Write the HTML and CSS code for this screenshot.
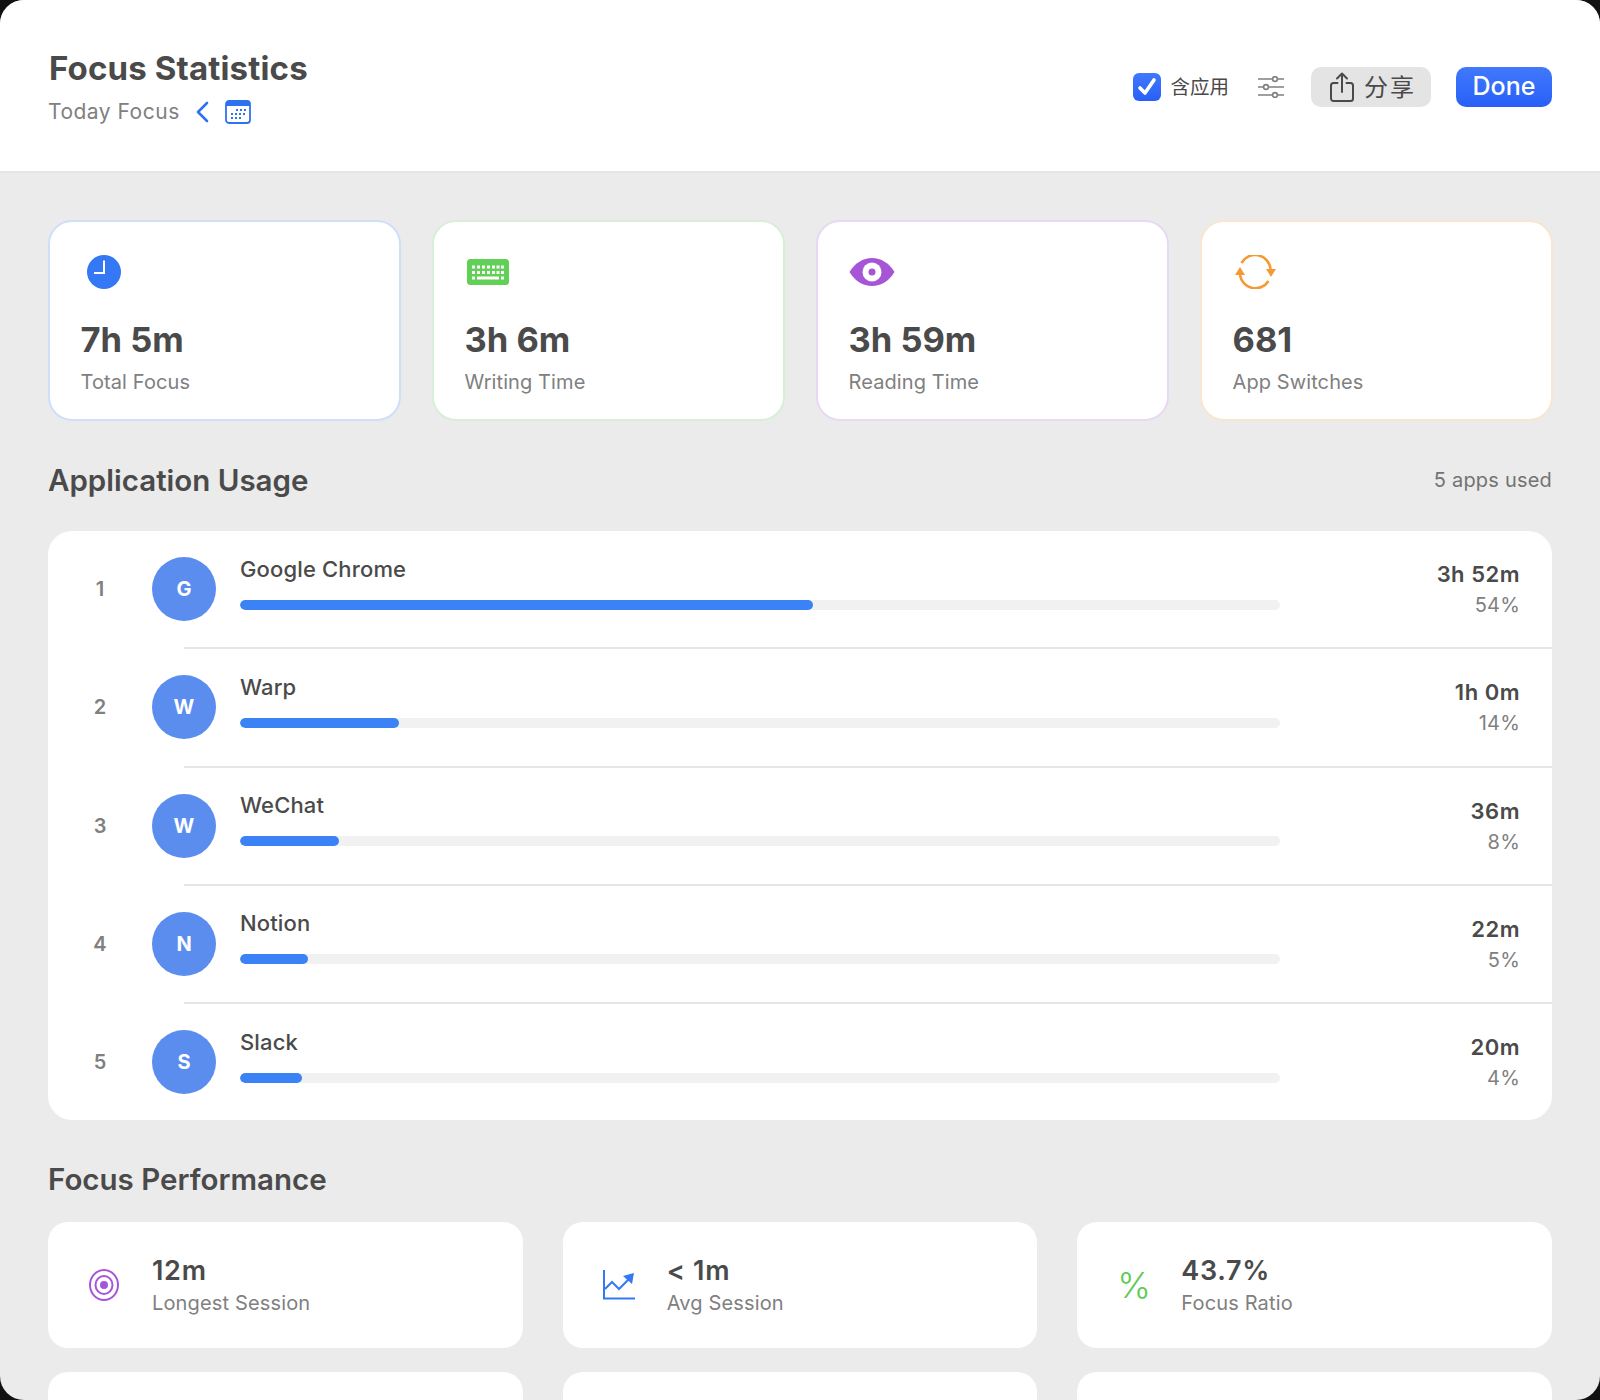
FILE: index.html
```html
<!DOCTYPE html>
<html lang="en">
<head>
  <meta charset="UTF-8">
  <title>Focus Statistics</title>
  <link rel="stylesheet" href="styles.css">
</head>
<body>
  <div class="window">

    <header class="header">
      <div class="header-left">
        <h1>Focus Statistics</h1>
        <div class="date-row">
          <span class="subtitle">Today Focus</span>
          <svg class="chevron" width="14" height="22" viewBox="0 0 14 22"><path d="M12 2 3 11l9 9" fill="none" stroke="#2f72f0" stroke-width="2.6" stroke-linecap="round" stroke-linejoin="round"/></svg>
          <svg class="calendar" width="26" height="24" viewBox="0 0 26 24">
            <rect x="1" y="1" width="24" height="22" rx="3" fill="#fff" stroke="#2f72f0" stroke-width="1.8"/>
            <path d="M1 6V4a3 3 0 0 1 3-3h18a3 3 0 0 1 3 3v2z" fill="#2f72f0"/>
            <g fill="#2f72f0">
              <rect x="11" y="9" width="2" height="2"/><rect x="15" y="9" width="2" height="2"/><rect x="19" y="9" width="2" height="2"/>
              <rect x="6" y="13" width="2" height="2"/><rect x="10" y="13" width="2" height="2"/><rect x="14" y="13" width="2" height="2"/><rect x="18" y="13" width="2" height="2"/>
              <rect x="6" y="17" width="2" height="2"/><rect x="10" y="17" width="2" height="2"/><rect x="14" y="17" width="2" height="2"/>
            </g>
          </svg>
        </div>
      </div>
      <div class="header-right">
        <label class="check-label">
          <span class="checkbox">
            <svg width="28" height="28" viewBox="0 0 28 28"><path d="M7 15l5 5 9-13" fill="none" stroke="#fff" stroke-width="3.6" stroke-linecap="round" stroke-linejoin="round"/></svg>
          </span>
          <span class="check-text">含应用</span>
        </label>
        <svg class="sliders" width="26" height="22" viewBox="0 0 26 22">
          <g stroke="#808080" stroke-width="1.6" fill="#fff">
            <path d="M0 3h26M0 11h26M0 19h26"/>
            <circle cx="17" cy="3" r="2.4"/><circle cx="8" cy="11" r="2.4"/><circle cx="17" cy="19" r="2.4"/>
          </g>
        </svg>
        <button class="btn-share">
          <svg width="24" height="30" viewBox="0 0 24 30">
            <path d="M7.5 11H3.5A2.5 2.5 0 0 0 1 13.500V26.500A2.500 2.500 0 0 0 3.500 29H20.500A2.500 2.500 0 0 0 23 26.500V13.500A2.500 2.500 0 0 0 20.500 11H16.500M12 20V2M7 6.500 12 1.500l5 5" fill="none" stroke="#4a4a4a" stroke-width="2" stroke-linecap="round" stroke-linejoin="round"/>
          </svg>
          <span>分享</span>
        </button>
        <button class="btn-done">Done</button>
      </div>
    </header>

    <main class="content">
      <section class="summary">
        <div class="summary-card blue">
          <div class="summary-icon">
            <svg class="clock" width="34" height="34" viewBox="0 0 34 34">
              <circle cx="17" cy="17" r="17" fill="#3478f6"/>
              <path d="M17 5.500V18H7" fill="none" stroke="#fff" stroke-width="2"/>
            </svg>
          </div>
          <div class="summary-value">7h 5m</div>
          <div class="summary-label">Total Focus</div>
        </div>
        <div class="summary-card green">
          <div class="summary-icon">
            <svg class="keyboard" width="42" height="26" viewBox="0 0 42 26">
              <rect width="42" height="26" rx="3.500" fill="#62cf57"/>
              <g fill="#fff">
                <rect x="5" y="6.500" width="3" height="3"/><rect x="10" y="6.500" width="3" height="3"/><rect x="15" y="6.500" width="3" height="3"/><rect x="20" y="6.500" width="3" height="3"/><rect x="25" y="6.500" width="3" height="3"/><rect x="29.500" y="6.500" width="3" height="3"/><rect x="34" y="6.500" width="3" height="3"/>
                <rect x="5" y="12" width="3" height="3"/><rect x="10" y="12" width="3" height="3"/><rect x="15" y="12" width="3" height="3"/><rect x="20" y="12" width="3" height="3"/><rect x="25" y="12" width="3" height="3"/><rect x="29.500" y="12" width="3" height="3"/><rect x="34" y="12" width="3" height="3"/>
                <rect x="5" y="17.500" width="3" height="3"/><rect x="10" y="17.500" width="22" height="3"/><rect x="34" y="17.500" width="3" height="3"/>
              </g>
            </svg>
          </div>
          <div class="summary-value">3h 6m</div>
          <div class="summary-label">Writing Time</div>
        </div>
        <div class="summary-card purple">
          <div class="summary-icon">
            <svg class="eye" width="46" height="28" viewBox="0 0 46 28">
              <path d="M0.500 14C6 5 14 0 23 0s17 5 22.500 14C40 23 32 28 23 28S6 23 0.500 14z" fill="#a655d6"/>
              <circle cx="23" cy="14" r="9.500" fill="#fff"/>
              <circle cx="23" cy="14" r="3.500" fill="#a655d6"/>
            </svg>
          </div>
          <div class="summary-value">3h 59m</div>
          <div class="summary-label">Reading Time</div>
        </div>
        <div class="summary-card orange">
          <div class="summary-icon">
            <svg class="sync" width="42" height="34" viewBox="0 0 42 34">
              <path d="M6.500 8A15.500 15.500 0 0 1 35.500 14M33.500 26A15.500 15.500 0 0 1 5 20" fill="none" stroke="#f59a33" stroke-width="2.600"/>
              <path d="M31 14h10l-5 8zM0 20h10L5 12z" fill="#f59a33"/>
            </svg>
          </div>
          <div class="summary-value">681</div>
          <div class="summary-label">App Switches</div>
        </div>
      </section>

      <div class="section-head">
        <h2>Application Usage</h2>
        <span class="section-note">5 apps used</span>
      </div>

      <section class="app-list">
        <div class="app-row">
          <div class="rank">1</div>
          <div class="avatar">G</div>
          <div class="app-info">
            <div class="app-name">Google Chrome</div>
            <div class="bar"><div class="bar-fill" style="width: 55.1%"></div></div>
          </div>
          <div class="app-stats"><div class="app-time">3h 52m</div><div class="app-pct">54%</div></div>
        </div>
        <hr class="row-line">
        <div class="app-row">
          <div class="rank">2</div>
          <div class="avatar">W</div>
          <div class="app-info">
            <div class="app-name">Warp</div>
            <div class="bar"><div class="bar-fill" style="width: 15.3%"></div></div>
          </div>
          <div class="app-stats"><div class="app-time">1h 0m</div><div class="app-pct">14%</div></div>
        </div>
        <hr class="row-line">
        <div class="app-row">
          <div class="rank">3</div>
          <div class="avatar">W</div>
          <div class="app-info">
            <div class="app-name">WeChat</div>
            <div class="bar"><div class="bar-fill" style="width: 9.5%"></div></div>
          </div>
          <div class="app-stats"><div class="app-time">36m</div><div class="app-pct">8%</div></div>
        </div>
        <hr class="row-line">
        <div class="app-row">
          <div class="rank">4</div>
          <div class="avatar">N</div>
          <div class="app-info">
            <div class="app-name">Notion</div>
            <div class="bar"><div class="bar-fill" style="width: 6.5%"></div></div>
          </div>
          <div class="app-stats"><div class="app-time">22m</div><div class="app-pct">5%</div></div>
        </div>
        <hr class="row-line">
        <div class="app-row">
          <div class="rank">5</div>
          <div class="avatar">S</div>
          <div class="app-info">
            <div class="app-name">Slack</div>
            <div class="bar"><div class="bar-fill" style="width: 6%"></div></div>
          </div>
          <div class="app-stats"><div class="app-time">20m</div><div class="app-pct">4%</div></div>
        </div>
      </section>

      <h2 class="perf-title">Focus Performance</h2>

      <section class="perf-grid">
        <div class="perf-card">
          <div class="perf-icon">
            <svg class="target" width="30" height="32" viewBox="0 0 30 32">
              <g fill="none" stroke="#a655d6" stroke-width="2">
                <ellipse cx="15" cy="16" rx="14" ry="15"/>
                <ellipse cx="15" cy="16" rx="8.500" ry="9"/>
              </g>
              <circle cx="15" cy="16" r="4" fill="#a655d6"/>
            </svg>
          </div>
          <div class="perf-text">
            <div class="perf-value">12m</div>
            <div class="perf-label">Longest Session</div>
          </div>
        </div>
        <div class="perf-card">
          <div class="perf-icon">
            <svg width="32" height="30" viewBox="0 0 32 30">
              <path d="M1 0v28.500h31" fill="none" stroke="#3478f6" stroke-width="2"/>
              <path d="M2 19l7-7 7 7 10-10" fill="none" stroke="#3478f6" stroke-width="2"/>
              <path d="M31 3l-2 11-9-8z" fill="#3478f6"/>
            </svg>
          </div>
          <div class="perf-text">
            <div class="perf-value">&lt; 1m</div>
            <div class="perf-label">Avg Session</div>
          </div>
        </div>
        <div class="perf-card">
          <div class="perf-icon"><span class="percent">%</span></div>
          <div class="perf-text">
            <div class="perf-value">43.7%</div>
            <div class="perf-label">Focus Ratio</div>
          </div>
        </div>
        <div class="perf-card"></div>
        <div class="perf-card"></div>
        <div class="perf-card"></div>
      </section>
    </main>

  </div>
</body>
</html>
```

FILE: styles.css
```css
* {
  box-sizing: border-box;
}

body {
  margin: 0;
  background: #111;
  font-family: Inter, "Noto Sans CJK SC", sans-serif;
  color: #4a4a4a;
}

.window {
  height: 1400px;
  overflow: hidden;
  background: #ebebeb;
  border-radius: 24px;
}

.header {
  height: 173px;
  background: #fff;
  border-bottom: 2px solid #e5e5e5;
  display: flex;
  justify-content: space-between;
  padding: 48px 48px 0 48px;
}

h1 {
  margin: 0 0 0 1px;
  font-size: 33px;
  line-height: 40px;
  font-weight: 700;
  letter-spacing: 0.15px;
}

.date-row {
  display: flex;
  align-items: center;
  margin-top: 11px;
}

.subtitle {
  font-size: 21px;
  line-height: 26px;
  letter-spacing: 0.5px;
  color: #808080;
}

.chevron {
  margin-left: 15px;
}

.calendar {
  margin-left: 16px;
}

.header-right {
  display: flex;
  align-items: center;
  height: 40px;
  margin-top: 19px;
}

.check-label {
  display: flex;
  align-items: center;
  font-size: 19.5px;
}

.check-text {
  padding-bottom: 4px;
}

.checkbox {
  width: 28px;
  height: 28px;
  border-radius: 6px;
  background: linear-gradient(#4079fb, #2860f8);
  margin-right: 9px;
}

.checkbox svg {
  display: block;
}

.sliders {
  margin-left: 29px;
}

button {
  border: none;
  height: 40px;
  border-radius: 10px;
  font-family: inherit;
}

.btn-share {
  width: 120px;
  margin-left: 27px;
  background: #e4e4e4;
  color: #4a4a4a;
  font-size: 24px;
  letter-spacing: 2px;
  display: flex;
  align-items: center;
  padding: 0 0 0 19px;
}

.btn-share span {
  margin-left: 10px;
  padding-bottom: 4px;
}

.btn-done {
  width: 96px;
  margin-left: 25px;
  padding: 0 0 2px 0;
  background: linear-gradient(#4079fb, #2860f8);
  color: #fff;
  font-size: 25px;
  font-weight: 500;
}

.content {
  padding: 47px 48px 0 48px;
}

.summary {
  display: grid;
  grid-template-columns: repeat(4, 353px);
  gap: 31px;
  margin-left: -0.5px;
}

.summary-card {
  height: 201px;
  background: #fff;
  border: 2px solid #ccc;
  border-radius: 24px;
  padding: 33px 30px 0 31px;
}

.summary-card.blue {
  border-color: #cfdff8;
}

.summary-card.green {
  border-color: #d8eed6;
}

.summary-card.purple {
  border-color: #e7d9f3;
}

.summary-card.orange {
  border-color: #f8e6d0;
}

.summary-icon {
  height: 34px;
  display: flex;
  align-items: center;
}

.clock {
  margin-left: 6px;
}

.keyboard {
  margin-left: 2px;
}

.sync {
  margin-left: 2px;
}

.summary-value {
  margin-top: 29px;
  font-size: 34.5px;
  line-height: 44px;
  font-weight: 700;
}

.summary-label {
  margin-top: 7px;
  font-size: 20px;
  line-height: 26px;
  letter-spacing: 0.1px;
  color: #808080;
}

.section-head {
  display: flex;
  justify-content: space-between;
  align-items: center;
  margin-top: 39px;
  height: 40px;
}

h2 {
  margin: 0;
  font-size: 29.5px;
  line-height: 40px;
  font-weight: 600;
}

.section-note {
  font-size: 20px;
  letter-spacing: 0.2px;
  color: #737373;
}

.app-list {
  margin-top: 31px;
  background: #fff;
  border-radius: 24px;
}

.app-row {
  height: 116.25px;
  display: flex;
  align-items: center;
  padding-left: 32px;
  padding-right: 32px;
}

.row-line {
  margin: 0 0 0 136px;
  border: none;
  height: 2px;
  background: #e5e5e5;
}

.rank {
  width: 40px;
  text-align: center;
  font-size: 20px;
  font-weight: 600;
  color: #808080;
}

.avatar {
  width: 64px;
  height: 64px;
  margin-left: 32px;
  border-radius: 50%;
  background: #5b8def;
  color: #fff;
  font-size: 20px;
  font-weight: 700;
  display: flex;
  align-items: center;
  justify-content: center;
}

.app-info {
  width: 1040px;
  margin-left: 24px;
  padding-bottom: 14px;
}

.app-name {
  font-size: 22px;
  line-height: 28px;
  font-weight: 500;
  letter-spacing: 0.15px;
}

.bar {
  height: 10px;
  margin-top: 17px;
  border-radius: 5px;
  background: #f1f1f1;
  overflow: hidden;
}

.bar-fill {
  height: 100%;
  border-radius: 5px;
  background: #3b82f6;
}

.app-stats {
  flex: 1;
  padding-top: 2px;
  text-align: right;
}

.app-time {
  font-size: 22px;
  line-height: 30px;
  font-weight: 600;
  letter-spacing: 0.5px;
}

.app-pct {
  font-size: 20px;
  line-height: 32px;
  letter-spacing: 0.2px;
  color: #808080;
}

.perf-title {
  margin-top: 38.5px;
}

.perf-grid {
  margin-top: 23px;
  display: grid;
  grid-template-columns: repeat(3, 1fr);
  gap: 24px 40px;
}

.perf-card {
  height: 126px;
  background: #fff;
  border-radius: 20px;
  display: flex;
  align-items: center;
  padding-left: 40px;
}

.perf-icon {
  width: 64px;
  display: flex;
  align-items: center;
}

.target {
  margin-left: 1px;
}

.percent {
  font-size: 36px;
  font-weight: 300;
  color: #5ecb52;
}

.perf-value {
  font-size: 27px;
  line-height: 34px;
  font-weight: 600;
  letter-spacing: 0.7px;
}

.perf-label {
  margin-top: 2px;
  font-size: 20px;
  line-height: 26px;
  letter-spacing: 0.15px;
  color: #808080;
}
```
